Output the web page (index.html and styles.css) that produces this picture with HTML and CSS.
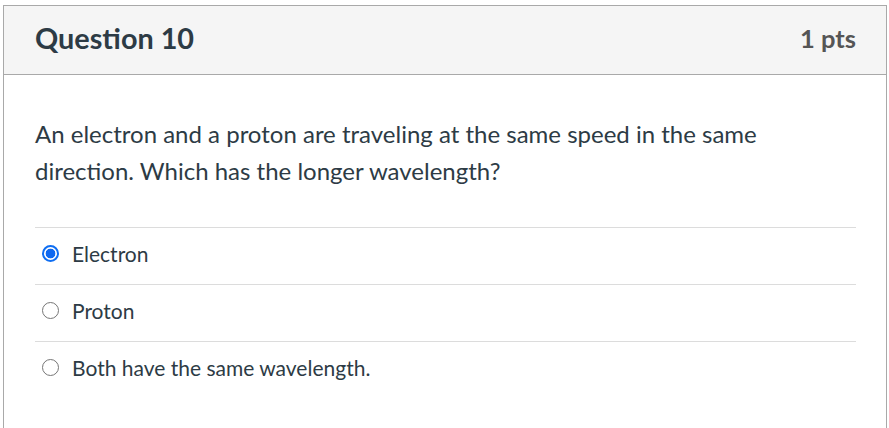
FILE: index.html
```html
<!DOCTYPE html>
<html>
<head>
<meta charset="utf-8">
<link rel="stylesheet" href="styles.css">
</head>
<body>
<div class="question">
  <div class="header">
    <h2 class="title">Question 10</h2>
    <span class="pts">1 pts</span>
  </div>
  <div class="content">
    <p class="text">An electron and a proton are traveling at the same speed in the same direction. Which has the longer wavelength?</p>
    <div class="answers">
      <label class="answer"><span class="radio checked"></span><span class="label">Electron</span></label>
      <label class="answer"><span class="radio"></span><span class="label">Proton</span></label>
      <label class="answer"><span class="radio"></span><span class="label">Both have the same wavelength.</span></label>
    </div>
  </div>
</div>
</body>
</html>
```
FILE: styles.css
```css
html, body {
  margin: 0;
  padding: 0;
  background: #fff;
  font-family: Lato, "Noto Sans", sans-serif;
  color: #2d3b45;
}
.question {
  margin: 5px 0 0 3px;
  width: 882px;
  height: 440px;
  border: 1px solid #a9a9a9;
  box-sizing: content-box;
}
.header {
  display: flex;
  justify-content: space-between;
  align-items: center;
  padding: 0 30px 5px 31px;
  box-sizing: border-box;
  height: 69px;
  background: #f5f5f5;
  border-bottom: 1px solid #a9a9a9;
}
.title {
  margin: 0;
  font-size: 28.8px;
  font-weight: 700;
  color: #2d3b45;
}
.pts {
  font-size: 25.5px;
  font-weight: 700;
  color: #555555;
}
.content {
  padding: 0 30px 0 31px;
}
.text {
  margin: 40px 0 0 0;
  font-size: 24px;
  line-height: 37px;
  width: 780px;
}
.answers {
  margin-top: 38px;
}
.answer {
  display: flex;
  align-items: center;
  box-sizing: border-box;
  height: 57px;
  padding-bottom: 6px;
  border-top: 1px solid #dcdcdc;
  font-size: 21px;
}
.radio {
  width: 17px;
  height: 17px;
  border: 1.5px solid #767676;
  border-radius: 50%;
  margin: 0 13px 0 7px;
  box-sizing: border-box;
  flex: none;
}
.radio.checked {
  border: 2px solid #0f6ef2;
  background: radial-gradient(circle, #0e68f0 0 4.5px, #fff 5.2px);
}
.label {
  color: #2d3b45;
}
```
